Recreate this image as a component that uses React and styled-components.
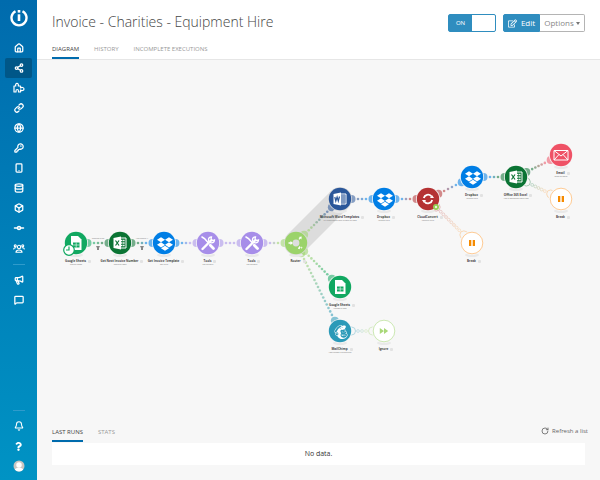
import React from "react";
import styled, { createGlobalStyle, css } from "styled-components";
import {
  House, Share2, Link, Globe, KeyRound, Smartphone, Database, Box,
  GitCommitHorizontal, Megaphone, MessageSquare, Bell, RotateCw,
} from "lucide-react";
import { FaQuestion, FaRegEdit, FaDropbox, FaMailchimp } from "react-icons/fa";

const GlobalStyle = createGlobalStyle`
  * { box-sizing: border-box; }
  body { margin: 0; font-family: "Open Sans", "Noto Sans", sans-serif; color: #555; background: #f7f7f7; }
  button, input { font: inherit; }
`;

const Page = styled.div`
  display: grid;
  grid-template-columns: 37px minmax(0, 1fr);
  min-height: 100vh;
`;

const Sidebar = styled.nav`
  display: flex;
  flex-direction: column;
  align-items: center;
  padding-bottom: 4px;
  background: linear-gradient(#006bad, #0079b5 35%, #0093c4);
`;

const Logo = styled.a`
  display: flex;
  align-items: center;
  justify-content: center;
  height: 38px;
  padding-bottom: 2px;
`;

const NavLink = styled.a`
  display: flex;
  align-items: center;
  justify-content: center;
  width: 27px;
  height: 20px;
  border-radius: 2px;
  color: #fff;
  ${(p) => p.$active && css`background: #005788;`}
`;

const Divider = styled.hr`
  width: 12px;
  height: 1px;
  margin: 6px 0 5px;
  border: 0;
  background: #2f9bcb;
`;

const Spacer = styled.div`
  flex: 1;
`;

const Main = styled.main`
  display: flex;
  flex-direction: column;
  min-width: 0;
`;

const Header = styled.header`
  background: #fff;
  border-bottom: 1px solid #e6e6e6;
  padding: 0 15px;
`;

const TitleRow = styled.div`
  display: flex;
  align-items: center;
  justify-content: space-between;
  height: 40px;
  padding-top: 6px;
`;

const Title = styled.h1`
  margin: 0 0 3px;
  font-size: 14px;
  line-height: 20px;
  font-weight: 300;
  color: #444;
  white-space: nowrap;
`;

const Actions = styled.div`
  display: flex;
  gap: 7px;
`;

const ToggleLabel = styled.label`
  display: flex;
  width: 48px;
  height: 18px;
  border: 1px solid #2f8dbf;
  border-radius: 2px;
  background: #fff;
  font-size: 6px;
  color: #fff;
  cursor: pointer;
`;

const ToggleInput = styled.input`
  appearance: none;
  width: 0;
  height: 0;
  margin: 0;
  &:not(:checked) + span { opacity: 0.4; }
`;

const ToggleText = styled.span`
  display: flex;
  align-items: center;
  justify-content: center;
  width: 50%;
  background: #2f8dbf;
`;

const ButtonGroup = styled.div`
  display: flex;
`;

const Button = styled.button`
  display: flex;
  align-items: center;
  justify-content: center;
  gap: ${(p) => (p.$primary ? "4px" : "2px")};
  width: ${(p) => (p.$primary ? "37px" : "45px")};
  height: 18px;
  padding: 0;
  font-size: 8px;
  line-height: 10px;
  border: 1px solid ${(p) => (p.$primary ? "#2f8dbf" : "#b4b4b4")};
  border-radius: ${(p) => (p.$primary ? "2px 0 0 2px" : "0 2px 2px 0")};
  border-left-width: ${(p) => (p.$primary ? "1px" : "0")};
  background: ${(p) => (p.$primary ? "#2f8dbf" : "#fff")};
  color: ${(p) => (p.$primary ? "#fff" : "#888")};
`;

const Caret = styled.span`
  border: 2px solid transparent;
  border-top: 3px solid #777;
  border-bottom: 0;
`;

const Tabs = styled.div`
  display: flex;
  gap: 15px;
`;

const Tab = styled.button`
  height: 19px;
  padding: 0;
  border: 0;
  border-bottom: 2px solid ${(p) => (p.$active ? "#006bad" : "transparent")};
  background: none;
  font-size: 6px;
  line-height: 8px;
  white-space: nowrap;
  color: ${(p) => (p.$active ? "#444" : "#999")};
`;

const Canvas = styled.section`
  position: relative;
  flex: 1;
  min-height: 320px;
  overflow: hidden;
`;

const Wires = styled.svg`
  position: absolute;
  inset: 0;
  width: 100%;
  height: 100%;
`;

const Node = styled.div`
  position: absolute;
  left: ${(p) => p.$x - 30}px;
  top: ${(p) => p.$y - 12}px;
  width: 60px;
  display: flex;
  flex-direction: column;
  align-items: center;
`;

const NodeIcon = styled.svg`
  width: 24px;
  height: 24px;
  overflow: visible;
`;

const NodeName = styled.div`
  display: flex;
  align-items: center;
  gap: 2px;
  margin-top: 4px;
  padding-left: 4px;
  font-size: 3px;
  line-height: 4px;
  font-weight: 700;
  color: #444;
  white-space: nowrap;
  &::after {
    content: "";
    width: 3px;
    height: 3px;
    border-radius: 1px;
    background: #e2e2e2;
  }
`;

const NodeAction = styled.div`
  font-size: 2px;
  line-height: 3px;
  color: #777;
  white-space: nowrap;
`;

const WireLabel = styled.div`
  position: absolute;
  left: ${(p) => p.$x - 10}px;
  top: ${(p) => p.$y - 6}px;
  width: 20px;
  font-size: 2px;
  line-height: 3px;
  text-align: center;
  color: #777;
`;

const Runs = styled.section`
  padding: 0 15px 15px;
`;

const RunsBar = styled.div`
  display: flex;
  justify-content: space-between;
  align-items: flex-start;
  margin-right: -3px;
`;

const Refresh = styled.button`
  display: flex;
  align-items: center;
  gap: 3px;
  height: 16px;
  padding: 0;
  border: 0;
  background: none;
  font-size: 6px;
  line-height: 8px;
  color: #666;
`;

const Empty = styled.div`
  height: 22px;
  margin-top: 1px;
  background: #fff;
  font-size: 7px;
  line-height: 22px;
  text-align: center;
  color: #333;
`;

const PuzzleIcon = () => (
  <svg width="12" height="12" viewBox="0 0 24 24" fill="none" stroke="currentColor" strokeWidth="2.400" strokeLinejoin="round">
    <path d="M2 8h3.500c-2-7 7-7 5 0H15v4c2-2 7-1.500 7 2s-5 4-7 2v4h-4v-2c0-4-5-4-5 0v2H2z" />
  </svg>
);

const CrowdIcon = () => (
  <svg width="12" height="11" viewBox="0 0 24 22" fill="none" stroke="currentColor" strokeWidth="2.200" strokeLinecap="round">
    <circle cx="12" cy="8" r="3.400" />
    <circle cx="4.500" cy="5.500" r="2" />
    <circle cx="19.500" cy="5.500" r="2" />
    <path d="M6 18.500c0-6 12-6 12 0zM1.500 12c0-2 2-3 4-2.500M22.500 12c0-2-2-3-4-2.500" />
  </svg>
);

const AvatarIcon = () => (
  <svg width="12" height="12" viewBox="0 0 24 24">
    <circle cx="12" cy="12" r="11" fill="#c9c5c1" />
    <circle cx="12" cy="10" r="5.500" fill="#fff" />
    <path d="M3.500 19c2-5 15-5 17 0a11 11 0 0 1-17 0z" fill="#fff" />
  </svg>
);

const lucide = (Icon, weight = 3) => <Icon size={10} strokeWidth={weight} />;

const topNav = [
  ["Home", lucide(House)],
  ["Scenarios", lucide(Share2), true],
  ["Templates", <PuzzleIcon />],
  ["Connections", lucide(Link)],
  ["Webhooks", lucide(Globe)],
  ["Keys", lucide(KeyRound)],
  ["Devices", lucide(Smartphone)],
  ["Data stores", lucide(Database)],
  ["Data structures", lucide(Box)],
  ["Flows", <GitCommitHorizontal size={12} strokeWidth={3} />],
  ["Team", <CrowdIcon />],
];
const midNav = [
  ["News", lucide(Megaphone)],
  ["Chat", lucide(MessageSquare)],
];
const lowNav = [
  ["Notifications", lucide(Bell, 2.5)],
  ["Help", <FaQuestion size={9} />],
  ["Profile", <AvatarIcon />],
];

const GREEN = "#11a861", EXCEL = "#0b7434", BLUE = "#007ee5", PURPLE = "#a78ee9";
const LIME = "#9bd36a", WORD = "#2b579a", RED = "#b53233", PINK = "#ef5266";
const TEAL = "#2b9ab8", ORANGE = "#ff9a2e", BG = "#f7f7f7", BAND = "#dcdcdc";

const nodes = {
  sheets: { x: 39, y: 183, c: GREEN, icon: "sheets", name: "Google Sheets", action: "Search Rows", clock: true },
  number: { x: 83, y: 183, c: EXCEL, icon: "excel", name: "Get Next Invoice Number", action: "Retrieve rows" },
  invoice: { x: 127, y: 183, c: BLUE, icon: "dropbox", name: "Get Invoice Template", action: "Get a file" },
  tools1: { x: 171, y: 183, c: PURPLE, icon: "tools", name: "Tools", action: "Set variable" },
  tools2: { x: 215, y: 183, c: PURPLE, icon: "tools", name: "Tools", action: "Set variable" },
  router: { x: 259, y: 183, c: LIME, icon: "router", name: "Router", halo: BAND },
  word: { x: 303, y: 139, c: WORD, icon: "word", name: "Microsoft Word Templates", action: "Fill a document with a batch of data", halo: BAND },
  drop2: { x: 347, y: 139, c: BLUE, icon: "dropbox", name: "Dropbox", action: "Upload a file" },
  cloud: { x: 391, y: 139, c: RED, icon: "cloud", name: "CloudConvert", action: "Convert a file", badge: true },
  drop3: { x: 435, y: 117, c: BLUE, icon: "dropbox", name: "Dropbox", action: "Upload a file" },
  office: { x: 479, y: 117, c: EXCEL, icon: "excel", name: "Office 365 Excel", action: "Add a worksheet table row" },
  email: { x: 524, y: 95, c: PINK, icon: "email", name: "Email", action: "Send an Email" },
  break1: { x: 524, y: 139, c: ORANGE, icon: "pause", name: "Break", hollow: true },
  break2: { x: 435, y: 183, c: ORANGE, icon: "pause", name: "Break", hollow: true },
  sheets2: { x: 303, y: 227, c: GREEN, icon: "sheets", name: "Google Sheets", action: "Update a Row" },
  chimp: { x: 303, y: 271, c: TEAL, icon: "chimp", name: "MailChimp", action: "Add/Update a subscriber" },
  ignore: { x: 347, y: 271, c: LIME, icon: "skip", name: "Ignore", hollow: true },
};

const wires = [
  ["sheets", "number"], ["number", "invoice"], ["invoice", "tools1"], ["tools1", "tools2"],
  ["tools2", "router"], ["router", "word"], ["word", "drop2"], ["drop2", "cloud"],
  ["cloud", "drop3"], ["drop3", "office"], ["office", "email"], ["router", "sheets2"],
  ["router", "chimp"], ["cloud", "break2", true], ["office", "break1", true], ["chimp", "ignore", true],
];

function mix(a, b, t) {
  const at = (h, i) => parseInt(h.slice(i, i + 2), 16);
  return `rgb(${[1, 3, 5].map((i) => Math.round(at(a, i) + (at(b, i) - at(a, i)) * t)).join(",")})`;
}

function Wire({ from, to, faint }) {
  const dx = to.x - from.x;
  const dy = to.y - from.y;
  const length = Math.hypot(dx, dy);
  const count = Math.round((length - 36) / 4);
  const at = (d) => ({ cx: from.x + (dx * d) / length, cy: from.y + (dy * d) / length });
  const paint = (c) => (faint ? { fill: BG, stroke: c } : { fill: c });
  return (
    <g opacity={faint ? 0.32 : 0.55}>
      <circle {...at(11.5)} r="4" {...paint(from.c)} />
      <circle {...at(length - 11.5)} r="4" {...paint(to.c)} />
      {Array.from({ length: count + 1 }, (_, i) => (
        <circle
          key={i}
          {...at(18 + (i * (length - 36)) / count)}
          r={faint ? 1.4 : 1.3}
          strokeWidth="0.7"
          {...paint(mix(from.c, to.c, i / count))}
        />
      ))}
    </g>
  );
}

function OfficeGlyph({ letter, color }) {
  const excel = letter === "X";
  return (
    <g>
      <path d="M12 7h6v10h-6z" fill="none" stroke="#fff" strokeWidth="1" />
      {excel ? (
        <path d="M13 9.500h4M13 12h4M13 14.500h4" stroke="#fff" strokeWidth="1.300" strokeDasharray="1.500 0.600" />
      ) : (
        <path d="M13 9h4M13 11h4M13 13h4M13 15h4" stroke="#fff" strokeWidth="0.800" />
      )}
      <path d="M5.500 7 13 5.500v13L5.500 17z" fill="#fff" />
      <path d={excel ? "M7.500 9.500l3.500 5M11 9.500l-3.500 5" : "M6.800 10l1 4 1.300-4 1.200 4 1.200-4.500"} fill="none" stroke={color} strokeWidth="1.200" />
    </g>
  );
}

function Glyph({ kind, color }) {
  switch (kind) {
    case "sheets":
      return (
        <g>
          <path d="M7 5h7l3.500 3.500V19H7z" fill="#fff" />
          <path d="M9 11.500h6.500v5H9z" fill={color} />
          <path d="M9 14h6.500M12.200 11.500v5" stroke="#fff" strokeWidth="0.600" />
        </g>
      );
    case "excel":
      return <OfficeGlyph letter="X" color={color} />;
    case "word":
      return <OfficeGlyph letter="W" color={color} />;
    case "dropbox":
      return <FaDropbox x="5" y="5" width="14" height="14" color="#fff" />;
    case "tools":
      return (
        <g fill="none" stroke="#fff" strokeLinecap="round">
          <path d="M6.500 18 15 9.500" strokeWidth="2.400" />
          <path d="M15.500 5.800a3 3 0 1 0 3 3l-2 .7-1.500-1.500z" strokeWidth="1.300" />
          <path d="M6 6l2.500 1.500 4 4.500" strokeWidth="1.600" />
          <path d="M14.300 14.300l3.200 3.200" strokeWidth="2.800" />
        </g>
      );
    case "router":
      return (
        <g fill="#fff">
          <circle cx="12" cy="12" r="3.400" fill="#dedede" />
          <path d="M4.500 11.300h2V10l2.500 2-2.500 2v-1.300h-2z" />
          <path d="m14.500 8 1.200-1.200-1-.8 3-.5-.3 3-.9-1-1.200 1.300z" />
          <path d="m15.500 15 1.200 1.200-1.300 2-1.600-.7zM17 15.500l1.500 1-1 1.600z" />
        </g>
      );
    case "cloud":
      return (
        <g fill="none" stroke="#fff" strokeWidth="1.800">
          <path d="M7.800 11a4.300 4.300 0 0 1 7.500-1.800M16.200 13a4.300 4.300 0 0 1-7.500 1.800" />
          <path d="M14 11h4l-2-3zM10 13H6l2 3z" fill="#fff" stroke="none" />
        </g>
      );
    case "email":
      return (
        <g fill="none" stroke="#fff" strokeWidth="1">
          <path d="M5 7.500h14v9.500H5z" />
          <path d="m5 7.500 7 5.500 7-5.500M5 17l5-5.500M19 17l-5-5.500" />
        </g>
      );
    case "pause":
      return <path d="M9 9h2.300v6H9zM12.700 9H15v6h-2.300z" fill="#f58a00" />;
    case "skip":
      return <path d="M7.800 9l4.200 3-4.200 3zM12 9l4.200 3-4.200 3z" fill="#a9d879" />;
    default:
      return <FaMailchimp x="5" y="5" width="14" height="14" color="#fff" />;
  }
}

function DiagramNode({ x, y, c, icon, name, action, hollow, clock, badge, halo = BG }) {
  return (
    <Node $x={x} $y={y}>
      <NodeIcon viewBox="0 0 24 24" aria-hidden="true">
        <ellipse cx="12" cy="24" rx="7" ry="2" fill="#e9e9e9" />
        <circle cx="12" cy="12" r="12" fill={halo} />
        <circle
          cx="12" cy="12" r={hollow ? 10.8 : 11.2}
          fill={hollow ? "#fff" : c}
          stroke={hollow ? c : "none"}
          strokeOpacity="0.500"
        />
        <Glyph kind={icon} color={c} />
        {clock && (
          <g fill="none" stroke={GREEN} strokeWidth="1.200">
            <circle cx="5" cy="19" r="5.300" fill="#fff" />
            <path d="M5 15.500V19H2" />
          </g>
        )}
        {badge && (
          <g>
            <circle cx="20" cy="20" r="3" fill="#94cf54" />
            <circle cx="20" cy="20" r="1.200" fill="#e8f7d8" />
          </g>
        )}
      </NodeIcon>
      <NodeName>{name}</NodeName>
      {action && <NodeAction>{action}</NodeAction>}
    </Node>
  );
}

const NavItems = ({ items }) =>
  items.map(([label, icon, active]) => (
    <NavLink key={label} href="#" aria-label={label} $active={active}>{icon}</NavLink>
  ));

export default function App() {
  return (
    <Page>
      <GlobalStyle />
      <Sidebar>
        <Logo href="#" aria-label="Dashboard">
          <svg width="18" height="18" viewBox="0 0 18 18" fill="none" stroke="#fff">
            <path d="M5.500 2.200a7.500 7.500 0 1 0 7 0" strokeWidth="2.400" />
            <path d="M9 5.300v6.700" strokeWidth="2.600" />
            <path d="M9 1v2.600" strokeWidth="2.600" />
          </svg>
        </Logo>
        <NavItems items={topNav} />
        <Divider />
        <NavItems items={midNav} />
        <Spacer />
        <Divider />
        <NavItems items={lowNav} />
      </Sidebar>
      <Main>
        <Header>
          <TitleRow>
            <Title>Invoice - Charities - Equipment Hire</Title>
            <Actions>
              <ToggleLabel>
                <ToggleInput type="checkbox" role="switch" defaultChecked />
                <ToggleText>ON</ToggleText>
              </ToggleLabel>
              <ButtonGroup>
                <Button $primary><FaRegEdit size={9} />Edit</Button>
                <Button>Options<Caret /></Button>
              </ButtonGroup>
            </Actions>
          </TitleRow>
          <Tabs>
            <Tab $active>DIAGRAM</Tab>
            <Tab>HISTORY</Tab>
            <Tab>INCOMPLETE EXECUTIONS</Tab>
          </Tabs>
        </Header>
        <Canvas>
          <Wires aria-hidden="true">
            <path d="M259 183 303 139" stroke={BAND} strokeWidth="24" />
            {wires.map(([a, b, faint]) => (
              <Wire key={a + b} from={nodes[a]} to={nodes[b]} faint={faint} />
            ))}
            <path d="M59 186h4l-1 2v2h-2v-2zM103 186h4l-1 2v2h-2v-2z" fill="#888" />
          </Wires>
          <WireLabel $x={61} $y={183}>Invoices exist</WireLabel>
          <WireLabel $x={105} $y={183}>Has invoice #</WireLabel>
          {Object.entries(nodes).map(([id, node]) => <DiagramNode key={id} {...node} />)}
        </Canvas>
        <Runs>
          <RunsBar>
            <Tabs>
              <Tab $active>LAST RUNS</Tab>
              <Tab>STATS</Tab>
            </Tabs>
            <Refresh><RotateCw size={8} strokeWidth={2.5} />Refresh a list</Refresh>
          </RunsBar>
          <Empty>No data.</Empty>
        </Runs>
      </Main>
    </Page>
  );
}
